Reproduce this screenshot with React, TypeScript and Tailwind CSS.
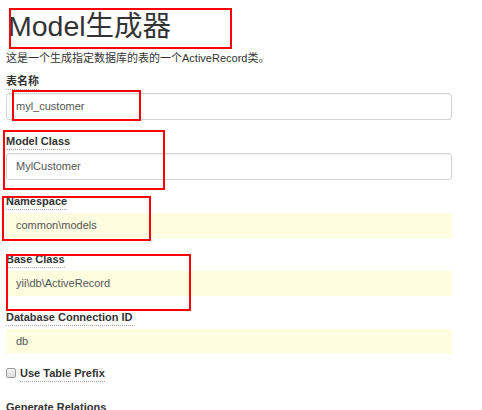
// Gii-style "Model生成器" form with red annotation boxes drawn over it.
const font = "font-['Liberation_Sans','Noto_Sans_CJK_SC',Arial,sans-serif]";

function FieldLabel({ text }: { text: string }) {
  return (
    <span className="border-b border-dotted border-[#aaa] text-[11px] font-bold leading-[16px] text-[#333]">
      {text}
    </span>
  );
}

function TextField({ label, value }: { label: string; value: string }) {
  return (
    <div className="flex flex-col items-start gap-[3px]">
      <FieldLabel text={label} />
      <div className="flex h-[27px] w-[446px] items-center rounded-[3px] border border-[#d4d4d4] bg-white px-[9px] text-[11px] text-[#555] shadow-[inset_0_1px_1px_rgba(0,0,0,0.06)]">
        {value}
      </div>
    </div>
  );
}

function StickyField({ label, value }: { label: string; value: string }) {
  return (
    <div className="flex flex-col items-start gap-[3px]">
      <FieldLabel text={label} />
      <div className="flex h-[25px] w-[446px] items-center bg-[#fefde0] px-[10px] text-[11px] text-[#555]">
        {value}
      </div>
    </div>
  );
}

function RedBox({ className }: { className: string }) {
  return <div className={"pointer-events-none absolute border-2 border-[#f00] " + className} />;
}

export default function App() {
  return (
    <div className={"relative h-[410px] w-[482px] overflow-hidden bg-white " + font}>
      <div className="flex flex-col pl-[6px] pt-[10px]">
        <h1 className="ml-[2px] text-[28.5px] font-normal leading-[32px] text-[#333]">Model生成器</h1>
        <p className="mt-[8px] text-[11px] leading-[16px] text-[#333]">
          这是一个生成指定数据库的表的一个ActiveRecord类。
        </p>

        <div className="mt-[7px] flex flex-col gap-[13px]">
          <TextField label="表名称" value="myl_customer" />
          <TextField label="Model Class" value="MylCustomer" />
          <StickyField label="Namespace" value="common\models" />
          <StickyField label="Base Class" value="yii\db\ActiveRecord" />
          <StickyField label="Database Connection ID" value="db" />

          <div className="-mt-[2px] flex items-center gap-[4px]">
            <span className="mb-[1px] block h-[10px] w-[10px] rounded-[2px] border border-[#9a9a9a] bg-gradient-to-b from-[#f4f4f4] to-[#dcdcdc]" />
            <FieldLabel text="Use Table Prefix" />
          </div>

          <div className="mt-[4px] flex">
            <FieldLabel text="Generate Relations" />
          </div>
        </div>
      </div>

      <RedBox className="left-[9px] top-[8px] h-[41px] w-[223px]" />
      <RedBox className="left-[12px] top-[90px] h-[31px] w-[129px]" />
      <RedBox className="left-[3px] top-[130px] h-[60px] w-[162px]" />
      <RedBox className="left-[2px] top-[196px] h-[45px] w-[149px]" />
      <RedBox className="left-[6px] top-[254px] h-[57px] w-[185px]" />
    </div>
  );
}
